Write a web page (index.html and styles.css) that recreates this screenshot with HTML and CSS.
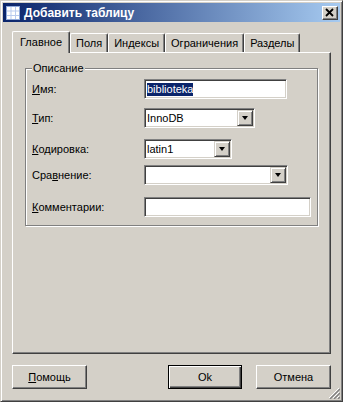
FILE: index.html
```html
<!DOCTYPE html>
<html lang="ru">
<head>
  <meta charset="UTF-8">
  <title>Добавить таблицу</title>
  <link rel="stylesheet" href="styles.css">
</head>
<body>
  <div class="window">
    <div class="titlebar">
      <svg class="app-icon" width="16" height="16" viewBox="0 0 16 16">
        <rect x="1.5" y="1.5" width="13" height="13" fill="#fff" stroke="#8FA9DA"/>
        <path d="M6 2v12M10.5 2v12M2 6h12M2 10.5h12" stroke="#B9CBEE" stroke-width="1"/>
      </svg>
      <span class="title">Добавить таблицу</span>
      <button class="close">
        <svg width="10" height="9" viewBox="0 0 10 9">
          <path d="M1 1l7 7M8 1l-7 7" stroke="#000" stroke-width="1.8"/>
        </svg>
      </button>
    </div>

    <div class="content">
      <div class="tabs">
        <div class="tab active">Главное</div>
        <div class="tab">Поля</div>
        <div class="tab">Индексы</div>
        <div class="tab">Ограничения</div>
        <div class="tab">Разделы</div>
      </div>

      <div class="panel">
        <fieldset class="group">
          <legend>Описание</legend>

          <div class="row row-name">
            <label><u>И</u>мя:</label>
            <div class="field w-name"><span class="selected">biblioteka</span></div>
          </div>

          <div class="row row-type">
            <label><u>Т</u>ип:</label>
            <div class="field combo w-type">
              <span class="value">InnoDB</span>
              <span class="drop"><i class="arrow"></i></span>
            </div>
          </div>

          <div class="row row-charset">
            <label><u>К</u>одировка:</label>
            <div class="field combo w-charset">
              <span class="value">latin1</span>
              <span class="drop"><i class="arrow"></i></span>
            </div>
          </div>

          <div class="row row-collate">
            <label>Сра<u>в</u>нение:</label>
            <div class="field combo w-collate">
              <span class="value"></span>
              <span class="drop"><i class="arrow"></i></span>
            </div>
          </div>

          <div class="row row-comment">
            <label><u>К</u>омментарии:</label>
            <div class="field w-comment"></div>
          </div>
        </fieldset>
      </div>

      <div class="buttons">
        <button class="btn"><u>П</u>омощь</button>
        <span class="spacer"></span>
        <button class="btn default">Ok</button>
        <button class="btn">Отмена</button>
      </div>
    </div>

    <svg class="grip" width="12" height="12" viewBox="0 0 12 12">
      <path d="M11 1L1 11M11 5L5 11M11 9L9 11" stroke="#fff" stroke-width="1"/>
      <path d="M12 2L2 12M12 6L6 12M12 10L10 12" stroke="#808080" stroke-width="1.4"/>
    </svg>
  </div>
</body>
</html>
```

FILE: styles.css
```css
body {
  margin: 0;
  background: #D4D0C8;
  font-family: "Liberation Sans", Arial, sans-serif;
  font-size: 11px;
  color: #000;
}
.window {
  position: relative;
  width: 343px;
  height: 402px;
  box-sizing: border-box;
  padding: 2px;
  border: 1px solid;
  border-color: #D4D0C8 #404040 #404040 #D4D0C8;
  box-shadow: inset 1px 1px 0 #fff, inset -1px -1px 0 #808080;
}
.titlebar {
  display: flex;
  align-items: center;
  height: 19px;
  padding: 0 2px;
  background: linear-gradient(to right, #0A246A, #A6CAF0);
  color: #fff;
}
.app-icon {
  flex: none;
}
.title {
  flex: 1;
  margin-left: 3px;
  font-size: 12px;
  font-weight: bold;
}
.close {
  display: flex;
  align-items: center;
  justify-content: center;
  width: 16px;
  height: 14px;
  padding: 0;
  background: #D4D0C8;
  border: 1px solid;
  border-color: #fff #404040 #404040 #fff;
  box-shadow: inset -1px -1px 0 #808080;
}
.content {
  padding: 9px 9px 0 9px;
}

/* tabs */
.tabs {
  display: flex;
  align-items: flex-end;
  height: 21px;
  position: relative;
  z-index: 1;
}
.tab {
  height: 18px;
  line-height: 18px;
  padding: 0 5px;
  border: 1px solid;
  border-bottom: none;
  border-color: #fff #404040 #404040 #fff;
  border-radius: 2px 2px 0 0;
  box-shadow: inset -1px 0 0 #808080;
}
.tab.active {
  height: 21px;
  line-height: 21px;
  margin-bottom: -1px;
  padding: 0 7px;
  background: #D4D0C8;
}

/* panel */
.panel {
  height: 302px;
  box-sizing: border-box;
  border: 1px solid;
  border-color: #fff #404040 #404040 #fff;
  box-shadow: inset -1px -1px 0 #808080;
}
.group {
  margin: 9px 12px 0 12px;
  padding: 0 6px 8px 6px;
  border: 1px solid #808080;
  box-shadow: inset 1px 1px 0 #fff, 1px 1px 0 #fff;
}
.group legend {
  padding: 0 1px;
  margin-left: 0;
  line-height: 13px;
  background: #D4D0C8;
}
.row {
  display: flex;
  align-items: center;
  height: 20px;
}
.row label {
  width: 112px;
  flex: none;
}
.row-name { margin-top: 4px; }
.row-type { margin-top: 9px; }
.row-charset { margin-top: 11px; }
.row-collate { margin-top: 6px; }
.row-comment { margin-top: 12px; }

.field {
  display: flex;
  align-items: center;
  height: 20px;
  box-sizing: border-box;
  padding: 0 2px;
  background: #fff;
  border: 1px solid;
  border-color: #808080 #fff #fff #808080;
  box-shadow: inset 1px 1px 0 #404040, inset -1px -1px 0 #D4D0C8;
}
.w-name { width: 143px; }
.w-type { width: 111px; }
.w-charset { width: 88px; }
.w-collate { width: 144px; }
.w-comment { width: 167px; }

.selected {
  background: #0A246A;
  color: #fff;
  line-height: 13px;
}
.combo .value {
  flex: 1;
}
.drop {
  display: flex;
  align-items: center;
  justify-content: center;
  width: 16px;
  height: 16px;
  box-sizing: border-box;
  margin-right: -1px;
  background: #D4D0C8;
  border: 1px solid;
  border-color: #D4D0C8 #404040 #404040 #D4D0C8;
  box-shadow: inset 1px 1px 0 #fff, inset -1px -1px 0 #808080;
}
.arrow {
  width: 0;
  height: 0;
  border-left: 3.5px solid transparent;
  border-right: 3.5px solid transparent;
  border-top: 4px solid #000;
}

/* bottom buttons */
.buttons {
  display: flex;
  gap: 14px;
  margin-top: 11px;
}
.spacer {
  flex: 1;
}
.btn {
  width: 75px;
  height: 24px;
  padding: 0;
  font-family: inherit;
  font-size: 11px;
  color: #000;
  background: #D4D0C8;
  border: 1px solid;
  border-color: #fff #404040 #404040 #fff;
  box-shadow: inset -1px -1px 0 #808080;
}
.btn.default {
  width: 74px;
  border-color: #000;
  box-shadow: inset 1px 1px 0 #fff, inset -1px -1px 0 #404040, inset -2px -2px 0 #808080;
}
.grip {
  position: absolute;
  right: 2px;
  bottom: 2px;
}
```
